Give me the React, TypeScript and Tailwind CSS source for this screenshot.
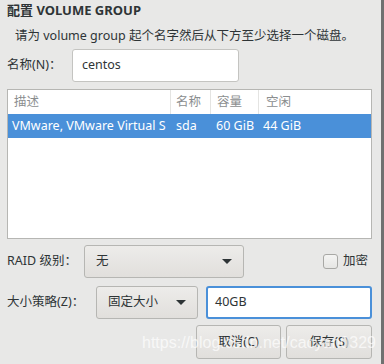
import React from "react";

const font = { fontFamily: '"Noto Sans", "Noto Sans CJK SC", sans-serif' };

const Arrow = () => (
  <svg width="10" height="5" viewBox="0 0 10 5" className="shrink-0">
    <path d="M0 0 L10 0 L5 5 Z" fill="#2e3436" />
  </svg>
);

const App = () => {
  return (
    <div
      className="relative flex w-[384px] h-[364px] bg-[#e8e8e7] text-[#2e3436] text-[12.5px] overflow-hidden"
      style={font}
    >
      <div className="flex flex-col flex-1 pl-[7px] pr-[9px]">
        <div className="h-[20px] leading-[20px] text-[13px] font-bold">配置 VOLUME GROUP</div>
        <div className="mt-[6px] h-[20px] leading-[20px] pl-[8px] whitespace-nowrap">
          请为 volume group 起个名字然后从下方至少选择一个磁盘。
        </div>

        <div className="mt-[3px] flex items-center h-[33px]">
          <span className="w-[65px]">名称(N)：</span>
          <div className="w-[167px] h-[33px] bg-white border border-[#c4c4c1] rounded-[3px] flex items-center pl-[9px]">
            centos
          </div>
        </div>

        <div className="mt-[7px] h-[150px] bg-white border border-[#b6b6b3]">
          <div className="flex h-[24px] text-[#8b8e8f] items-center">
            <div className="w-[163px] pl-[6px] h-full flex items-center border-r border-[#e4e4e2]">描述</div>
            <div className="w-[40px] pl-[5px] h-full flex items-center border-r border-[#e4e4e2]">名称</div>
            <div className="w-[48px] pl-[6px] h-full flex items-center border-r border-[#e4e4e2]">容量</div>
            <div className="flex-1 pl-[7px] h-full flex items-center">空闲</div>
          </div>
          <div className="flex h-[24px] bg-[#4a90d9] text-white items-center whitespace-nowrap">
            <div className="w-[163px] pl-[4px] overflow-hidden">VMware, VMware Virtual S</div>
            <div className="w-[40px] pl-[5px]">sda</div>
            <div className="w-[48px] pl-[5px]">60 GiB</div>
            <div className="flex-1 pl-[4px]">44 GiB</div>
          </div>
        </div>

        <div className="mt-[6px] flex items-center h-[33px]">
          <span className="w-[77px]">RAID 级别：</span>
          <div className="w-[160px] h-[33px] border border-[#b6b6b3] rounded-[3px] bg-gradient-to-b from-[#edecea] to-[#e1dfdc] flex items-center justify-between pl-[11px] pr-[11px]">
            <span>无</span>
            <Arrow />
          </div>
          <div className="ml-auto flex items-center mr-[4px]">
            <div className="w-[15px] h-[15px] border border-[#a8a8a5] rounded-[3px] bg-gradient-to-b from-[#f4f4f3] to-[#e6e6e4]" />
            <span className="ml-[5px]">加密</span>
          </div>
        </div>

        <div className="mt-[8px] flex items-center h-[33px]">
          <span className="w-[89px] whitespace-nowrap">大小策略(Z)：</span>
          <div className="w-[102px] h-[33px] border border-[#b6b6b3] rounded-[3px] bg-gradient-to-b from-[#edecea] to-[#e1dfdc] flex items-center justify-between pl-[11px] pr-[11px]">
            <span>固定大小</span>
            <Arrow />
          </div>
          <div className="ml-[8px] flex-1 h-[33px] bg-white border-2 border-[#4a90d9] rounded-[3px] flex items-center pl-[7px]">
            40GB
          </div>
        </div>

        <div className="mt-[6px] flex justify-end gap-[5px]">
          <div className="w-[85px] h-[34px] border border-[#b6b6b3] rounded-[3px] bg-gradient-to-b from-[#edecea] to-[#e1dfdc] flex items-center justify-center">
            取消(C)
          </div>
          <div className="w-[86px] h-[34px] border border-[#b6b6b3] rounded-[3px] bg-gradient-to-b from-[#edecea] to-[#e1dfdc] flex items-center justify-center">
            保存(S)
          </div>
        </div>
      </div>
      <div className="w-[3px] bg-[#707070]" />

      <div
        className="absolute left-[142px] top-[333px] text-[16px] leading-[20px] text-white/70 whitespace-nowrap pointer-events-none"
        style={{ fontFamily: '"Liberation Sans", Arial, sans-serif' }}
      >
        https://blog.csdn.net/cacyan0329
      </div>
    </div>
  );
};

export default App;
